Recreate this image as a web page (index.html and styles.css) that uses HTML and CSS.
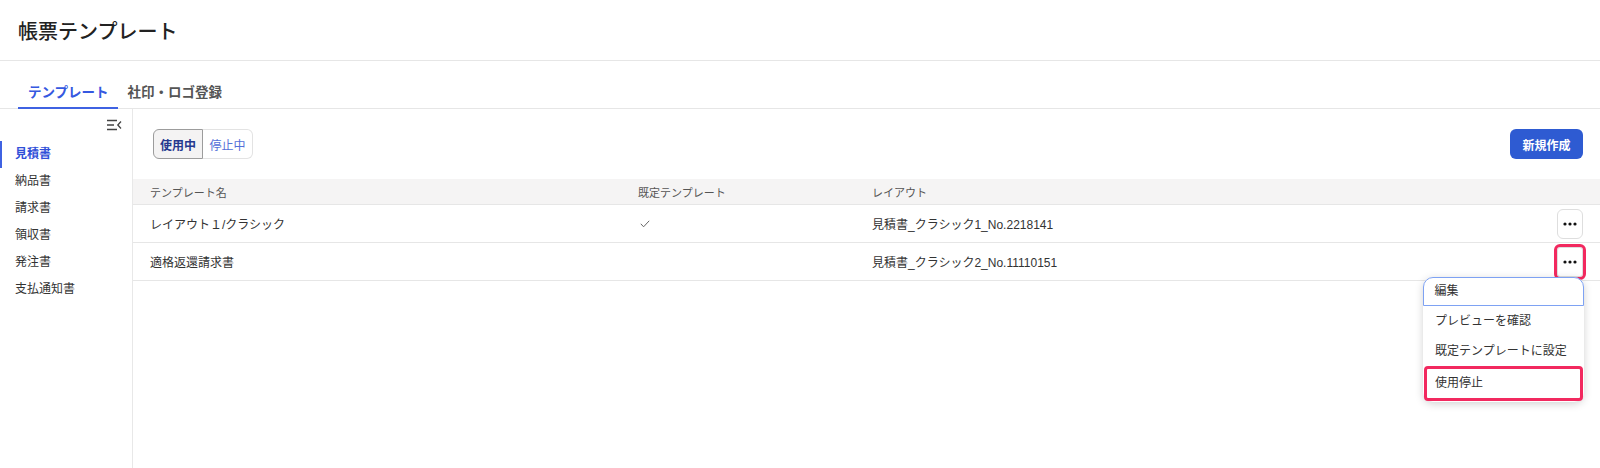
FILE: index.html
```html
<!DOCTYPE html>
<html lang="ja">
<head>
    <meta charset="UTF-8">
    <meta name="viewport" content="width=device-width, initial-scale=1.0">
    <title>帳票テンプレート</title>
    <link rel="stylesheet" href="styles.css">
</head>
<body>
    <header class="page-header">
        <h1>帳票テンプレート</h1>
    </header>

    <nav class="tabs">
        <a class="tab active">テンプレート</a>
        <a class="tab">社印・ロゴ登録</a>
    </nav>

    <div class="layout">
        <aside class="sidebar">
            <div class="sidebar-top">
                <svg class="collapse-icon" width="15" height="12" viewBox="0 0 15 12">
                    <path d="M0 1.5h10M0 6h7M0 10.5h10" stroke="#444" stroke-width="1.4" fill="none"/>
                    <path d="M14 2.5L10.8 6L14 9.5" stroke="#444" stroke-width="1.3" fill="none"/>
                </svg>
            </div>
            <ul class="doc-list">
                <li class="active">見積書</li>
                <li>納品書</li>
                <li>請求書</li>
                <li>領収書</li>
                <li>発注書</li>
                <li>支払通知書</li>
            </ul>
        </aside>

        <main class="content">
            <div class="toolbar">
                <div class="segment">
                    <button class="seg active">使用中</button>
                    <button class="seg">停止中</button>
                </div>
                <button class="btn-primary">新規作成</button>
            </div>

            <div class="table">
                <div class="row head">
                    <div class="cell">テンプレート名</div>
                    <div class="cell">既定テンプレート</div>
                    <div class="cell">レイアウト</div>
                    <div class="cell"></div>
                </div>
                <div class="row">
                    <div class="cell">レイアウト１/クラシック</div>
                    <div class="cell">
                        <svg class="check" width="10" height="8" viewBox="0 0 10 8">
                            <path d="M0.8 3.8L3.6 6.8L9.2 0.8" stroke="#666" stroke-width="1" fill="none"/>
                        </svg>
                    </div>
                    <div class="cell">見積書_クラシック1_No.2218141</div>
                    <div class="cell actions">
                        <button class="more">
                            <svg width="14" height="4" viewBox="0 0 14 4"><circle cx="2" cy="2" r="1.6"/><circle cx="7" cy="2" r="1.6"/><circle cx="12" cy="2" r="1.6"/></svg>
                        </button>
                    </div>
                </div>
                <div class="row">
                    <div class="cell">適格返還請求書</div>
                    <div class="cell"></div>
                    <div class="cell">見積書_クラシック2_No.11110151</div>
                    <div class="cell actions">
                        <button class="more marked">
                            <svg width="14" height="4" viewBox="0 0 14 4"><circle cx="2" cy="2" r="1.6"/><circle cx="7" cy="2" r="1.6"/><circle cx="12" cy="2" r="1.6"/></svg>
                        </button>
                    </div>
                    <ul class="menu">
                        <li class="focused">編集</li>
                        <li>プレビューを確認</li>
                        <li>既定テンプレートに設定</li>
                        <li class="marked">使用停止</li>
                    </ul>
                </div>
            </div>
        </main>
    </div>
</body>
</html>
```

FILE: styles.css
```css
body {
    margin: 0;
    font-family: 'Liberation Sans', 'Noto Sans CJK JP', sans-serif;
    color: #333;
    background-color: #fff;
}
ul {
    margin: 0;
    padding: 0;
    list-style: none;
}
button {
    font-family: inherit;
    cursor: pointer;
}
.page-header {
    height: 60px;
    border-bottom: 1px solid #e6e6e6;
    display: flex;
    align-items: center;
    padding-left: 18px;
}
.page-header h1 {
    margin: 0;
    font-size: 20px;
    font-weight: 500;
    color: #222;
}
.tabs {
    height: 47px;
    border-bottom: 1px solid #e6e6e6;
    display: flex;
    align-items: flex-end;
    padding-left: 18px;
}
.tab {
    padding: 0 9px 0 10px;
    line-height: 28px;
    font-size: 13.5px;
    font-weight: 700;
    color: #555;
    border-bottom: 2px solid transparent;
    margin-bottom: -1px;
}
.tab.active {
    color: #3558e0;
    border-bottom-color: #3f62e2;
}
.layout {
    display: flex;
    height: 359px;
}
.sidebar {
    width: 132px;
    border-right: 1px solid #e8e8e8;
    flex-shrink: 0;
}
.sidebar-top {
    height: 32px;
    display: flex;
    justify-content: flex-end;
    align-items: center;
    padding-right: 10px;
}
.doc-list li {
    height: 27px;
    line-height: 27px;
    padding-left: 15px;
    font-size: 12px;
    color: #333;
}
.doc-list li.active {
    color: #3050d8;
    font-weight: 700;
    box-shadow: inset 2px 0 0 #3f62e2;
}
.content {
    flex: 1;
    padding-top: 20px;
}
.toolbar {
    display: flex;
    justify-content: space-between;
    align-items: center;
    padding: 0 17px 0 20px;
    height: 30px;
    margin-bottom: 20px;
}
.segment {
    display: flex;
}
.seg {
    width: 50px;
    height: 30px;
    padding: 0;
    font-size: 12px;
    background-color: #fff;
    color: #5470d8;
    border: 1px solid #e3e3e3;
    border-left: none;
    border-radius: 0 6px 6px 0;
}
.seg.active {
    background-color: #f4f3f3;
    color: #25398f;
    font-weight: 700;
    border: 1px solid #9c9c9c;
    border-radius: 6px 0 0 6px;
}
.btn-primary {
    width: 73px;
    height: 30px;
    padding: 0;
    border: none;
    border-radius: 6px;
    background-color: #2e5bd2;
    color: #fff;
    font-size: 12px;
    font-weight: 700;
}
.row {
    display: grid;
    grid-template-columns: 488px 234px 1fr 60px;
    height: 37px;
    align-items: center;
    border-bottom: 1px solid #e6e6e6;
    font-size: 12px;
    color: #333;
    position: relative;
}
.row.head {
    height: 25px;
    background-color: #f5f4f4;
    font-size: 11px;
    color: #555;
}
.cell {
    padding-left: 17px;
}
.check {
    display: block;
    margin-left: 2px;
}
.actions {
    display: flex;
    justify-content: flex-end;
    padding-right: 17px;
}
.more {
    width: 29px;
    height: 30px;
    padding: 0;
    background-color: #fff;
    border: 1px solid #dedede;
    border-radius: 6px;
    display: flex;
    align-items: center;
    justify-content: center;
}
.more svg {
    fill: #111;
}
.more.marked {
    outline: 3.5px solid #f2295f;
    outline-offset: 0;
    border-radius: 3px;
}
.menu {
    position: absolute;
    top: 34px;
    right: 16px;
    width: 161px;
    background-color: #fff;
    border-radius: 10px;
    box-shadow: 0 2px 8px rgba(0, 0, 0, 0.18);
    padding-bottom: 1px;
    z-index: 2;
}
.menu li {
    height: 30px;
    line-height: 30px;
    padding-left: 12px;
    font-size: 12px;
    color: #333;
}
.menu li.focused {
    height: 27px;
    line-height: 27px;
    border: 1.5px solid #7ea2f3;
    border-radius: 10px 10px 0 0;
    padding-left: 10.5px;
}
.menu li.marked {
    height: 29px;
    line-height: 29px;
    margin: 0 1px;
    border: 3px solid #f2295f;
    border-radius: 4px;
    padding-left: 8px;
}
```
